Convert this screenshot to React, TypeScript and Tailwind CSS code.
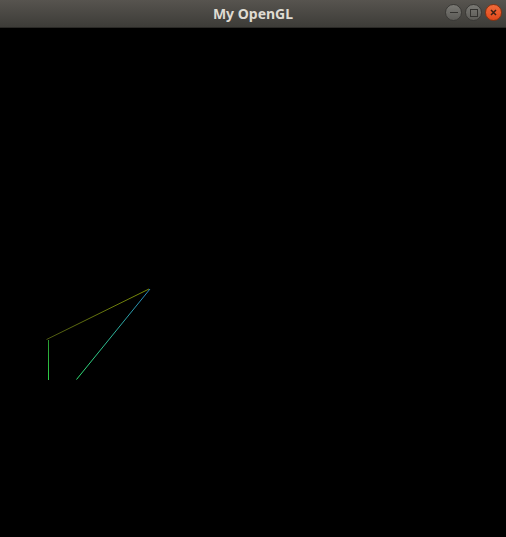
export default function App() {
  return (
    <div className="w-[506px] h-[537px] flex flex-col bg-black overflow-hidden">
      <div className="h-[28px] flex items-center relative bg-gradient-to-b from-[#57544f] to-[#3d3c38] border-b border-[#2a2926]">
        <div
          className="flex-1 text-center text-[14px] font-bold text-[#dfdbd2] leading-none"
          style={{ fontFamily: '"Noto Sans", "DejaVu Sans", sans-serif' }}
        >
          My OpenGL
        </div>
        <div className="absolute right-[4px] top-[4px] flex gap-[3px]">
          <div className="w-[17px] h-[17px] rounded-full bg-gradient-to-b from-[#7a7974] to-[#5c5b57] border border-[#3a3936] flex items-center justify-center">
            <div className="w-[8px] h-[1.5px] bg-[#33322f]" />
          </div>
          <div className="w-[17px] h-[17px] rounded-full bg-gradient-to-b from-[#7a7974] to-[#5c5b57] border border-[#3a3936] flex items-center justify-center">
            <div className="w-[8px] h-[8px] border-[1.5px] border-[#33322f]" />
          </div>
          <div className="w-[17px] h-[17px] rounded-full bg-gradient-to-b from-[#f26b3a] to-[#e0481a] border border-[#8a3210] flex items-center justify-center">
            <svg width="9" height="9" viewBox="0 0 9 9">
              <path d="M2 2 L7 7 M7 2 L2 7" stroke="#3a2014" strokeWidth="1.5" />
            </svg>
          </div>
        </div>
      </div>
      <div className="flex-1 bg-black">
        <svg width="506" height="509" viewBox="0 0 506 509">
          <defs>
            <linearGradient id="olive" x1="47" y1="311" x2="149" y2="261" gradientUnits="userSpaceOnUse">
              <stop offset="0" stopColor="#4e5a12" />
              <stop offset="1" stopColor="#7a8c08" />
            </linearGradient>
            <linearGradient id="green" x1="48" y1="312" x2="48" y2="352" gradientUnits="userSpaceOnUse">
              <stop offset="0" stopColor="#2a9a32" />
              <stop offset="1" stopColor="#2ed048" />
            </linearGradient>
            <linearGradient id="cyan" x1="150" y1="261" x2="76" y2="352" gradientUnits="userSpaceOnUse">
              <stop offset="0" stopColor="#2a84c0" />
              <stop offset="1" stopColor="#30e070" />
            </linearGradient>
          </defs>
          <line x1="46.5" y1="311.5" x2="149" y2="261" stroke="url(#olive)" strokeWidth="1" />
          <line x1="48.5" y1="312" x2="48.5" y2="352" stroke="url(#green)" strokeWidth="1" />
          <line x1="150" y1="261" x2="76.5" y2="351.5" stroke="url(#cyan)" strokeWidth="1" />
        </svg>
      </div>
    </div>
  )
}
